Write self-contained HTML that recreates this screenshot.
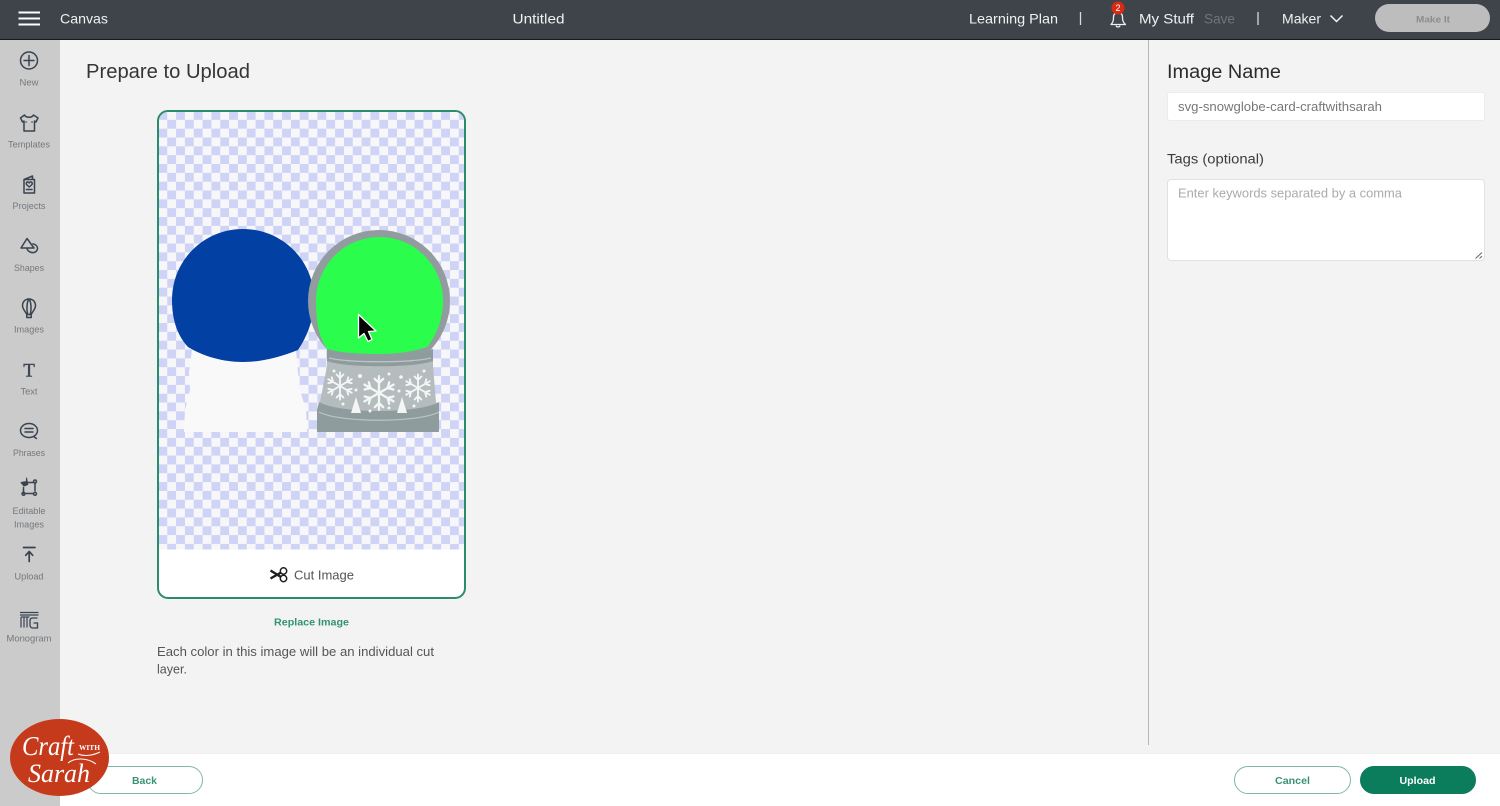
<!DOCTYPE html>
<html lang="en">
<head>
<meta charset="utf-8">
<title>Prepare to Upload</title>
<style>
html,body{margin:0;padding:0;width:1500px;height:806px;overflow:hidden;background:#f3f3f3;font-family:"Liberation Sans",sans-serif}
#wrap{position:absolute;left:0;top:0;width:1500px;height:806px;filter:blur(.35px)}
.box{position:absolute;box-sizing:border-box}
#top{left:0;top:0;width:1500px;height:40px;background:#3f444b;border-bottom:1px solid #15181c}
#side{left:0;top:40px;width:60px;height:766px;background:#cbcbcb}
#bottom{left:60px;top:753px;width:1440px;height:53px;background:#fff;border-top:1px solid #eee}
#divider{left:1148px;top:40px;width:1px;height:705px;background:#b4b5b5}
#card{left:157px;top:110px;width:309px;height:489px;background:#fff;border:2px solid #2a8c6c;border-radius:11px}
#name{left:1167px;top:92px;width:318px;height:29px;background:#fff;border:1px solid #ececec;border-radius:3px}
#tags{left:1167px;top:179px;width:318px;height:82px;background:#fff;border:1px solid #e0e0e0;border-radius:4px}
#makeit{left:1375px;top:4px;width:115px;height:28px;background:#bdbdbd;border-radius:14px}
.btn{top:766px;height:28px;border-radius:14px;border:1.5px solid #7fb9a5;background:#fff}
#back{left:87px;width:116px}
#cancel{left:1234px;width:117px}
#upload{left:1360px;width:116px;background:#0b7d5c;border-color:#0b7d5c}
svg{position:absolute;left:0;top:0}
.ic{fill:none;stroke:#3a4350;stroke-width:1.5;stroke-linecap:round;stroke-linejoin:round}
.nl{font-size:9.5px;fill:#74787c;text-anchor:middle}
.flk{stroke:#f4f6f6;stroke-width:2.200;fill:none;stroke-linecap:round}
</style>
</head>
<body>
<div id="wrap">
<div class="box" id="top"></div>
<div class="box" id="side"></div>
<div class="box" id="bottom"></div>
<div class="box" id="divider"></div>
<div class="box" id="card"></div>
<div class="box" id="name"></div>
<div class="box" id="tags"></div>
<div class="box" id="makeit"></div>
<div class="box btn" id="back"></div>
<div class="box btn" id="cancel"></div>
<div class="box btn" id="upload"></div>

<svg width="1500" height="806" viewBox="0 0 1500 806" xmlns="http://www.w3.org/2000/svg">
<defs>
<pattern id="chk" x="158.400" y="111" width="17.670" height="17.670" patternUnits="userSpaceOnUse">
<rect width="17.670" height="17.670" fill="#f7f7f9"/>
<rect width="8.835" height="8.835" fill="#cfd3f5"/>
<rect x="8.835" y="8.835" width="8.835" height="8.835" fill="#cfd3f5"/>
</pattern>
<g id="arm"><path d="M0 0V-16M-4-13.500 0-9.500 4-13.500"/></g>
<g id="flake">
<use href="#arm"/><use href="#arm" transform="rotate(60)"/><use href="#arm" transform="rotate(120)"/>
<use href="#arm" transform="rotate(180)"/><use href="#arm" transform="rotate(240)"/><use href="#arm" transform="rotate(300)"/>
</g>
</defs>

<!-- checker -->
<path d="M168 112H455A9 9 0 0 1 464 121V549.500H159V121A9 9 0 0 1 168 112Z" fill="url(#chk)"/>

<!-- top bar -->
<g stroke="#fff" stroke-width="2"><path d="M18.500 12.500H40M18.500 18.500H40M18.500 24.500H40"/></g>
<g font-size="14" fill="#f0f1f1">
<text x="60" y="23.500" textLength="48" lengthAdjust="spacingAndGlyphs">Canvas</text>
<text x="512.500" y="23.500" textLength="52" lengthAdjust="spacingAndGlyphs">Untitled</text>
<text x="969" y="23.500" textLength="89" lengthAdjust="spacingAndGlyphs">Learning Plan</text>
<text x="1139" y="23.500" textLength="55" lengthAdjust="spacingAndGlyphs">My Stuff</text>
<text x="1204" y="23.500" textLength="31" lengthAdjust="spacingAndGlyphs" fill="#6f747b">Save</text>
<text x="1282" y="23.500" textLength="39" lengthAdjust="spacingAndGlyphs">Maker</text>
</g>
<path d="M1080.500 12V25M1258 12V25" stroke="#d8d9da" stroke-width="1.300"/>
<path d="M1330.500 15.500 1336.500 21.500 1342.500 15.500" fill="none" stroke="#f4f5f5" stroke-width="1.500"/>
<path d="M1111 24.500C1113.500 22 1113.500 19.500 1113.500 17C1113.500 11 1122.500 11 1122.500 17C1122.500 19.500 1122.500 22 1125.500 24.500ZM1116 25.500C1116.500 27.500 1119.500 27.500 1120 25.500" fill="none" stroke="#eef0f0" stroke-width="1.300" stroke-linejoin="round"/>
<circle cx="1118" cy="8" r="6.500" fill="#d92b12"/>
<text x="1118" y="11" font-size="9" fill="#fff" text-anchor="middle">2</text>
<text x="1433" y="22.500" font-size="9.500" font-weight="bold" fill="#8d8d8d" text-anchor="middle" textLength="34" lengthAdjust="spacingAndGlyphs">Make It</text>

<!-- sidebar icons -->
<g class="ic">
<circle cx="29" cy="60.500" r="8.500"/><path d="M29 55.500V65.500M24 60.500H34"/>
<path d="M24.500 115 20.500 118 22.500 122 24 121V131H34.500V121L36 122 38 118 33.500 115C32 118 26 118 24.500 115ZM26 122H26.100M32 122H32.100"/>
<path d="M24 179.500H34.500V193H24ZM24 179.500 32.500 176V179.500M26.500 189.500H32M29.200 187 26.500 184.500C25.500 182 28.500 181 29.200 183 30 181 33 182 32 184.500Z"/>
<path d="M27 238.500 21 248H34L27 238.500Z"/><path d="M27 248.500C28 252 33 254 36 251.500 38.500 249 38 245 33 243.800"/>
<path d="M29 299C24.500 299 22.500 302.500 22.500 305.500 22.500 309.500 26 312 26.800 314.500H31.200C32 312 35.500 309.500 35.500 305.500 35.500 302.500 33.500 299 29 299ZM29 299C26.500 302 26.500 311 28 314.500M29 299C31.500 302 31.500 311 30 314.500M26.800 314.500V317.500H31.200V314.500"/>
<ellipse cx="29" cy="430.500" rx="8.500" ry="7"/><path d="M25 428.500H33M25 432H33M33.500 436.500 36.500 438.500"/>
<path d="M23.500 487.500V493.500M35 482.500V490.500M25.500 493.500H33M28 482.500H33"/><circle cx="23.500" cy="493.800" r="1.500"/><circle cx="35" cy="493.800" r="1.500"/><circle cx="35" cy="481.500" r="1.500"/>
<path d="M23.500 547.500H35M29.200 561.500V552M25.700 555.300 29.200 551.500 32.700 555.300" stroke-width="1.700"/>
</g>
<path d="M21 482.500 26.500 481.500 26.500 478 27.800 484.500 24 486Z" fill="#3a4350" stroke="#3a4350" stroke-width="1" stroke-linejoin="round"/>
<text x="29" y="376.500" font-family="Liberation Serif,serif" font-size="19" fill="#3a4350" stroke="#3a4350" stroke-width=".4" text-anchor="middle">T</text>
<g fill="none" stroke="#3a4350" stroke-width="1.200">
<path d="M20 612.500H38.500M20 615H38.500"/>
<path d="M21 617V627.500M24 617V627.500M27 617V627.500"/>
<path d="M37.500 618H32.500C30.500 618 30 619.500 30 621V625C30 627 31 628 33 628H37.500V623H33.500" stroke-width="1.300"/>
<path d="M21 617H29.500" />
</g>

<!-- sidebar labels -->
<text class="nl" x="29" y="85.500">New</text>
<text class="nl" x="29" y="147.500" textLength="42" lengthAdjust="spacingAndGlyphs">Templates</text>
<text class="nl" x="29" y="209" textLength="33" lengthAdjust="spacingAndGlyphs">Projects</text>
<text class="nl" x="29" y="271" textLength="30" lengthAdjust="spacingAndGlyphs">Shapes</text>
<text class="nl" x="29" y="332.500" textLength="30" lengthAdjust="spacingAndGlyphs">Images</text>
<text class="nl" x="29" y="394.500" textLength="17" lengthAdjust="spacingAndGlyphs">Text</text>
<text class="nl" x="29" y="456" textLength="32" lengthAdjust="spacingAndGlyphs">Phrases</text>
<text class="nl" x="29" y="514" textLength="33" lengthAdjust="spacingAndGlyphs">Editable</text>
<text class="nl" x="29" y="527.500" textLength="30" lengthAdjust="spacingAndGlyphs">Images</text>
<text class="nl" x="29" y="579.500" textLength="29" lengthAdjust="spacingAndGlyphs">Upload</text>
<text class="nl" x="29" y="641.500" textLength="45" lengthAdjust="spacingAndGlyphs">Monogram</text>

<!-- heading -->
<text x="86" y="78" font-size="20" fill="#333537" textLength="164" lengthAdjust="spacingAndGlyphs">Prepare to Upload</text>

<!-- white backing layer -->
<path d="M192 350H296L298 372 300 390 306 410 307 432H184L185 410 190 390 189 372Z" fill="#f9f9fa"/>

<!-- blue layer -->
<path d="M188 347C175 333 172 315 172 300 172 260 204 229 243 229 282 229 314 260 314 300 314 318 308 335 298 350 280 357 262 362 243 362 222 362 203 356 188 347Z" fill="#0340a3"/>

<!-- globe -->
<circle cx="379" cy="301" r="71" fill="#929c9f"/>
<path d="M327 349C318 336 316 318 316 301 316 266 344 237 379.500 237 415 237 443 266 443 301 443 318 437 335 427 347 412 352 396 354 379 354 359 354 342 353 327 349Z" fill="#2bfd4d"/>

<!-- base -->
<path d="M327 353C345 358 413 358 433 353L433 366 436 402 439 410V432H317V410L320 402 327 366Z" fill="#b4bcbd"/>
<path d="M327 349C345 356 413 356 433 349V361C415 368 345 368 327 361Z" fill="#8f9c9e"/>
<path d="M329 358C350 363 410 363 431 358" fill="none" stroke="#bcc5c5" stroke-width="1.200"/>
<path d="M319 402C340 414 418 414 439 402V432H317V410Z" fill="#8f9c9e"/>
<path d="M319 412C340 423 418 423 439 412" fill="none" stroke="#bcc5c5" stroke-width="1.200"/>
<use href="#flake" class="flk" transform="translate(340 386) scale(.85)"/>
<use href="#flake" class="flk" transform="translate(379 393) scale(1.050)"/>
<use href="#flake" class="flk" transform="translate(418 388) scale(.85)"/>
<path d="M356 397 361 413H351ZM402 397 407 413H397Z" fill="#f4f6f6"/>
<g fill="#f4f6f6"><circle cx="334" cy="371" r="1.500"/><circle cx="360" cy="376" r="2"/><circle cx="389" cy="374" r="1.500"/><circle cx="401" cy="377" r="1.800"/><circle cx="424" cy="371" r="1.500"/><circle cx="356" cy="390" r="1.500"/><circle cx="399" cy="391" r="1.500"/><circle cx="343" cy="404" r="1.500"/><circle cx="370" cy="411" r="1.500"/><circle cx="389" cy="408" r="1.500"/><circle cx="414" cy="406" r="1.500"/></g>

<!-- cursor -->
<path d="M358.500 314.500V338L364 333.500 368 341.500 372 339.500 368.500 331.500 376 331Z" fill="#050505" stroke="#fff" stroke-width="1.300" stroke-linejoin="round"/>

<!-- cut image row -->
<g fill="none" stroke="#1e1e1e" stroke-width="1.500">
<circle cx="283.500" cy="571" r="3.200"/><circle cx="283.500" cy="578.500" r="3.200"/>
<path d="M281 572.500 270.500 578.500M281 577 270.500 570.500" stroke-width="2.400"/>
</g>
<text x="294" y="579.500" font-size="12.500" fill="#555" textLength="60" lengthAdjust="spacingAndGlyphs">Cut Image</text>
<text x="274" y="625.500" font-size="10.500" font-weight="bold" fill="#2f9274" textLength="75" lengthAdjust="spacingAndGlyphs">Replace Image</text>
<text x="157" y="656" font-size="12.500" fill="#555" textLength="277" lengthAdjust="spacingAndGlyphs">Each color in this image will be an individual cut</text>
<text x="157" y="673.500" font-size="12.500" fill="#555" textLength="30" lengthAdjust="spacingAndGlyphs">layer.</text>

<!-- right panel -->
<text x="1167" y="78" font-size="19" fill="#2a2c2e" textLength="114" lengthAdjust="spacingAndGlyphs">Image Name</text>
<text x="1178" y="111" font-size="12.500" fill="#777" textLength="204" lengthAdjust="spacingAndGlyphs">svg-snowglobe-card-craftwithsarah</text>
<text x="1167" y="163.500" font-size="13.500" fill="#3a3c3e" textLength="97" lengthAdjust="spacingAndGlyphs">Tags (optional)</text>
<text x="1178" y="197.500" font-size="12.500" fill="#ababab" textLength="224" lengthAdjust="spacingAndGlyphs">Enter keywords separated by a comma</text>
<path d="M1475.500 258.500 1482 252.500M1479.500 258.500 1482 256" stroke="#666" stroke-width="1"/>

<!-- buttons -->
<g font-size="10.500" font-weight="bold" text-anchor="middle">
<text x="144.500" y="784" fill="#3a9177" textLength="25" lengthAdjust="spacingAndGlyphs">Back</text>
<text x="1292.500" y="784" fill="#3a9177" textLength="35" lengthAdjust="spacingAndGlyphs">Cancel</text>
<text x="1417.500" y="784" fill="#fff" textLength="36" lengthAdjust="spacingAndGlyphs">Upload</text>
</g>

<!-- logo -->
<ellipse cx="59.500" cy="757.500" rx="49.500" ry="38.500" fill="#c63a1c"/>
<g font-family="Liberation Serif,serif" font-style="italic" fill="#fff">
<text x="22" y="755" font-size="27" textLength="52" lengthAdjust="spacingAndGlyphs">Craft</text>
<text x="79" y="750" font-size="7.500" font-style="normal" font-weight="bold" textLength="21" lengthAdjust="spacingAndGlyphs">WITH</text>
<text x="28" y="782" font-size="26" textLength="62" lengthAdjust="spacingAndGlyphs">Sarah</text>
</g>
<path d="M78 754C85 757 94 755 100 752M68 763C75 757 88 758 96 764" fill="none" stroke="#fff" stroke-width="1"/>
</svg>
</div>
</body>
</html>
